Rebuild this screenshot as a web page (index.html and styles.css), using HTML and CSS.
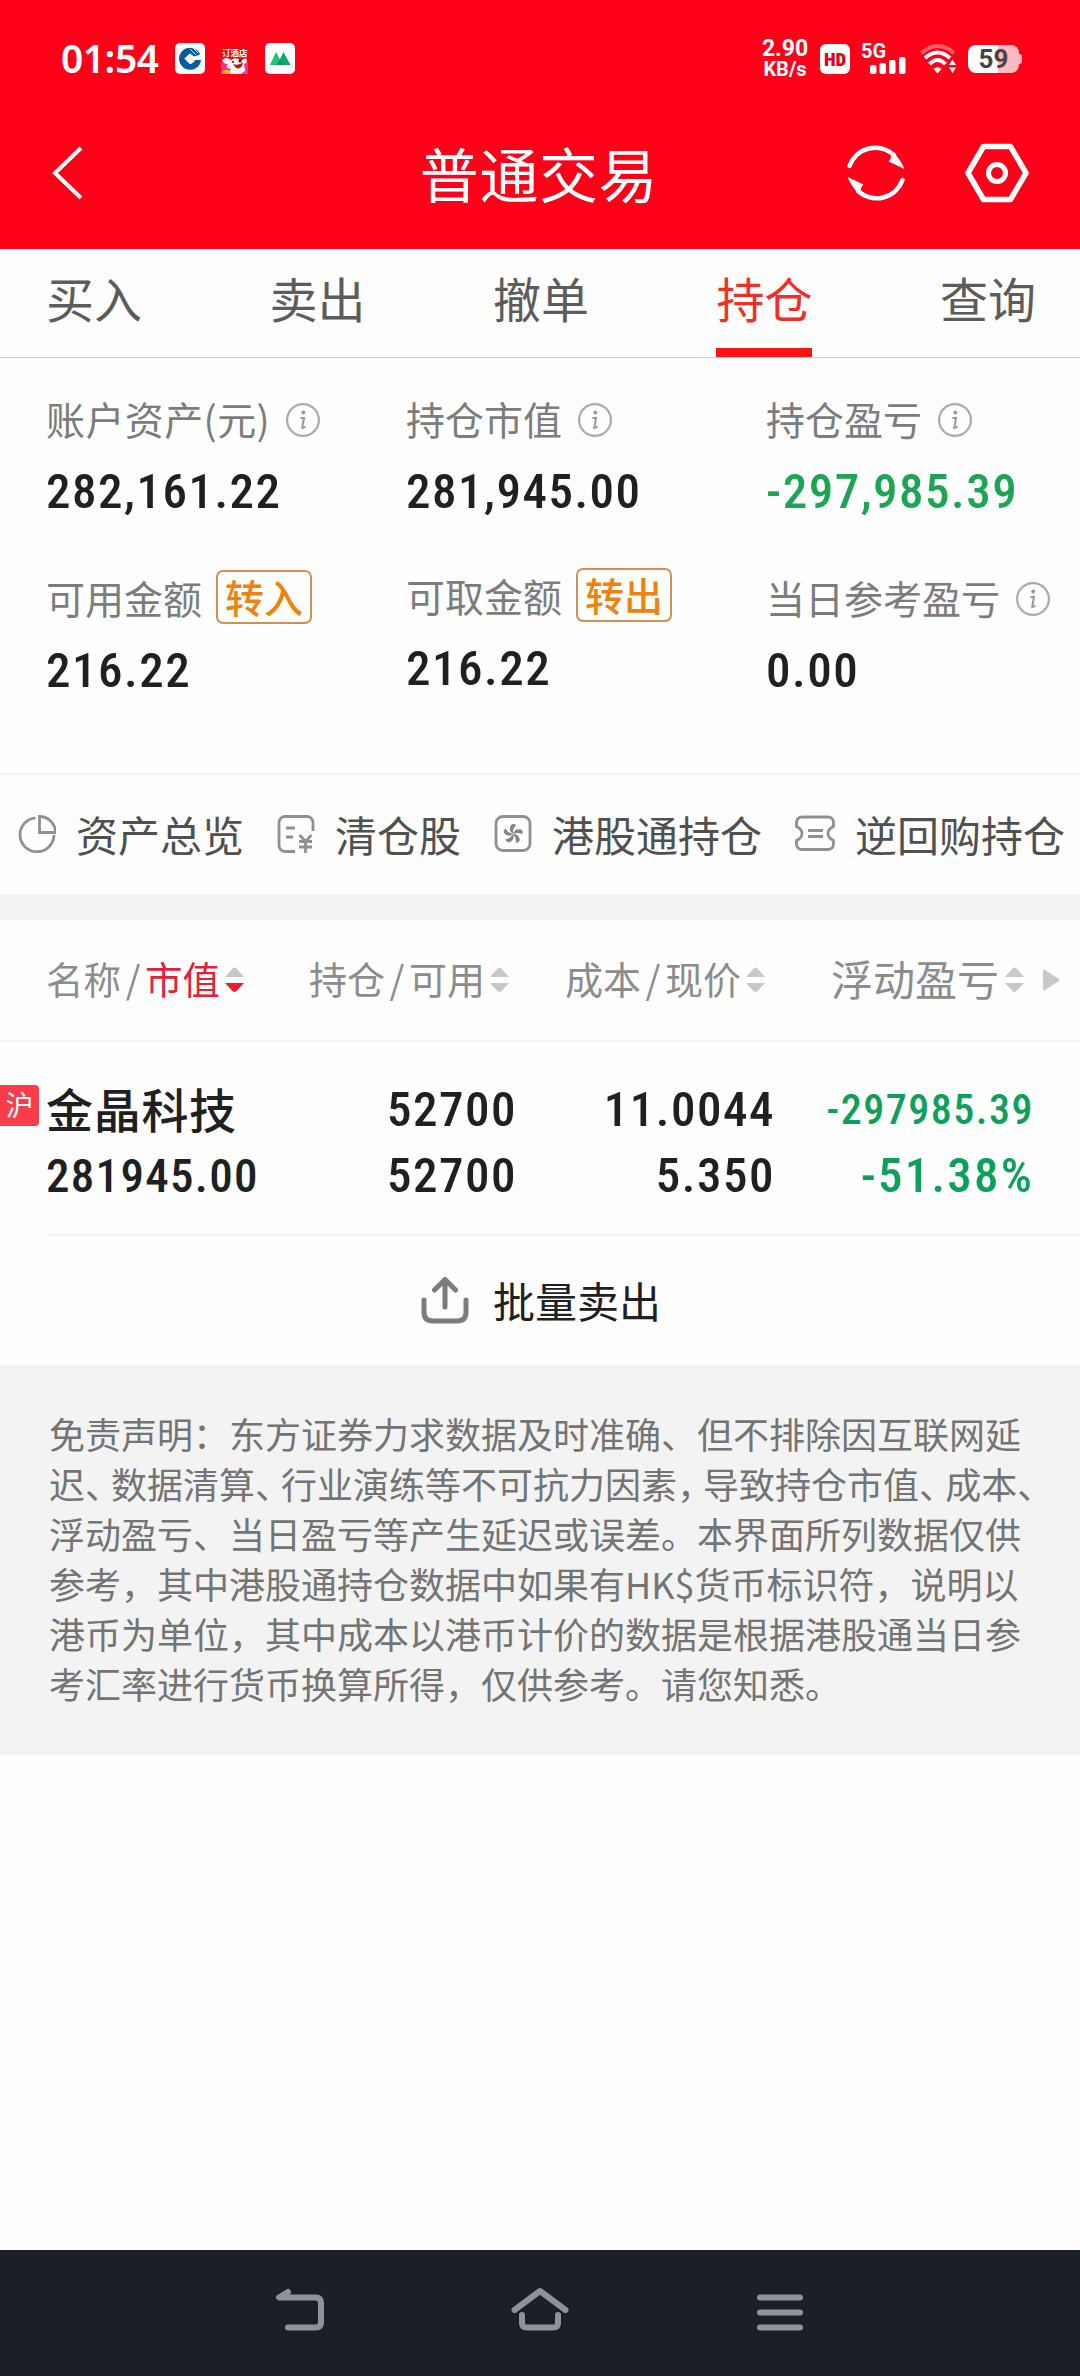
FILE: index.html
```html
<!DOCTYPE html>
<html lang="zh-CN">
  <head>
    <meta charset="utf-8" />
    <meta name="viewport" content="width=device-width, initial-scale=1" />
    <title>普通交易</title>
    <link rel="stylesheet" href="styles.css">
  </head>
<body>
    <header class="header">
        <div class="status">
            <span class="time">01:54</span>
            <!--notification icons-->
            <svg class="app" width="30" height="31" viewBox="0 0 30 31">
                <rect width="30" height="31" rx="5" fill="#fff"/>
                <path d="M25 11A11 11 0 1 0 26 17H20A6 6 0 0 1 15 21L9.500 15.500L15 10.500L19 13.500L24 12Z" fill="#065a9e"/>
                <path d="M15 10.500L20 15.500L15 21L9.500 15.500Z" fill="#fff"/>
                <path d="M15 6L21 12M18 5L23 10" stroke="#fff" stroke-width="1"/>
            </svg>
            <svg class="app rabbit" width="27" height="31" viewBox="0 0 27 31">
                <rect width="27" height="31" fill="#f00511"/>
                <rect y="19" width="27" height="12" fill="#f0317f"/>
                <text x="1" y="13" font-size="8.500" font-weight="700" fill="#fff">订酒店</text>
                <path d="M1 17Q5 13 10 17Q15 13 20 18Q25 13 26 17Q26 20 23 21L25 31H7L10 26Q3 25 7 21Q2 21 1 17Z" fill="#fff4f2"/>
                <path d="M12 21Q18 23 22 19Q21 27 15 25Z" fill="#a52025"/>
                <circle cx="12" cy="19" r="1" fill="#222"/>
                <circle cx="19" cy="18" r="1.500" fill="#222"/>
                <path d="M0 31Q2 26 8 27L10 31Z" fill="#ffb21c"/>
                <path d="M20 31L25 27L27 31Z" fill="#b44ee0"/>
            </svg>
            <svg class="app" width="30" height="31" viewBox="0 0 30 31">
                <rect width="30" height="31" rx="5" fill="#fff"/>
                <path d="M5 22L11 9L18 22Z" fill="#19c86f"/>
                <path d="M12 22L18.500 9L25.500 22Z" fill="#14a66b"/>
                <path d="M12 22L15 16L18 22Z" fill="#0f9460"/>
            </svg>

            <div class="status-right">
                <div class="speed"><span>2.90</span><span>KB/s</span></div>
                <div class="hd">HD</div>
                <div class="signal">
                    <span>5G</span>
                    <svg width="37" height="18" viewBox="0 0 37 18">
                        <g fill="#fff">
                            <rect x="0" y="9" width="6.500" height="9" rx="2"/>
                            <rect x="9.500" y="7" width="6.500" height="11" rx="2"/>
                            <rect x="19" y="4" width="6.500" height="14" rx="2"/>
                            <rect x="29" y="1" width="6.500" height="17" rx="2"/>
                        </g>
                    </svg>
                </div>
                <svg class="wifi" width="37" height="30" viewBox="0 0 37 30" fill="none">
                    <path d="M1.500 9Q17.500 -5 34 9" stroke="#ff6068" stroke-width="4"/>
                    <path d="M5 14Q17.500 3 30 14" stroke="#fff" stroke-width="4"/>
                    <path d="M9.500 20Q17.500 12 25.500 20" stroke="#fff" stroke-width="4"/>
                    <path d="M13.500 25Q17.500 21.500 21.500 25L17.500 29.500Z" fill="#fff"/>
                    <path d="M29 21L32.500 15.500L36 21ZM29 23.500L32.500 29L36 23.500Z" fill="#fff"/>
                </svg>
                <div class="battery">59</div>
            </div>
        </div>
        <div class="titlebar">
            <svg class="back" width="36" height="56" viewBox="0 0 36 56" fill="none">
                <path d="M32 3L6 28L32 53" stroke="#fff" stroke-width="4"/>
            </svg>
            <h1>普通交易</h1>
            <div class="actions">
                <svg width="60" height="60" viewBox="0 0 60 60" fill="none">
                    <g id="half">
                        <path d="M3.500 23A27.500 27.500 0 0 1 48 12" stroke="#fff" stroke-width="4.500" stroke-linecap="round"/>
                        <path d="M46 8.500Q54 15 58.500 26L42.500 18.500Q45.500 16 46 8.500Z" fill="#fff"/>
                    </g>
                    <use href="#half" transform="rotate(180 30 30)"/>
                </svg>
                <svg width="64" height="60" viewBox="0 0 64 60" fill="none" stroke="#fff">
                    <path d="M18.500 3.500H45.500L61 30L45.500 56.500H18.500L3 30Z" stroke-width="5.500" stroke-linejoin="round"/>
                    <circle cx="32" cy="30" r="8.500" stroke-width="5"/>
                </svg>
            </div>
        </div>
    </header>

    <nav class="tabs">
        <a class="tab">买入</a>
        <a class="tab">卖出</a>
        <a class="tab">撤单</a>
        <a class="tab active">持仓</a>
        <a class="tab">查询</a>
    </nav>

    <!--shared symbols-->
    <svg class="defs">
        <symbol id="info" viewBox="0 0 34 34">
            <circle cx="17" cy="17" r="15.900" fill="none" stroke="#aaa" stroke-width="2.200"/>
            <circle cx="17.300" cy="9.500" r="2" fill="#999"/>
            <path d="M14.500 15H18L16.200 25Q17 25.500 19.500 23.500" fill="none" stroke="#999" stroke-width="2"/>
        </symbol>
        <symbol id="sort" viewBox="0 0 19 26">
            <path d="M7.500 1.500Q9.500 -.5 11.500 1.500L19 10H0Z" fill="#c8c8c8"/>
            <path class="down" d="M0 16H19L11.500 24Q9.500 26 7.500 24Z"/>
        </symbol>
    </svg>

    <section class="assets">
        <div class="asset">
            <div class="label wide">账户资产(元)<svg class="info"><use href="#info"/></svg></div>
            <div class="value">282,161.22</div>
        </div>
        <div class="asset">
            <div class="label">持仓市值<svg class="info"><use href="#info"/></svg></div>
            <div class="value">281,945.00</div>
        </div>
        <div class="asset">
            <div class="label">持仓盈亏<svg class="info"><use href="#info"/></svg></div>
            <div class="value green">-297,985.39</div>
        </div>
        <div class="asset">
            <div class="label">可用金额<span class="transfer">转入</span></div>
            <div class="value">216.22</div>
        </div>
        <div class="asset raised">
            <div class="label">可取金额<span class="transfer">转出</span></div>
            <div class="value">216.22</div>
        </div>
        <div class="asset">
            <div class="label">当日参考盈亏<svg class="info"><use href="#info"/></svg></div>
            <div class="value">0.00</div>
        </div>
    </section>

    <section class="links">
        <a class="link">
            <svg width="38" height="38" viewBox="0 0 38 38">
                <path d="M17.500 2.800A17 17 0 1 0 36 20"/>
                <path d="M21.500 1.500V17.500H37.500A16 16 0 0 0 21.500 1.500Z"/>
            </svg>资产总览
        </a>
        <a class="link">
            <svg width="38" height="38" viewBox="0 0 38 38">
                <path d="M36 16V7.500A6 6 0 0 0 30 1.500H8A6 6 0 0 0 2 7.500V30.500A6 6 0 0 0 8 36.500H18"/>
                <path d="M9 13H18M9 22H16M22.500 20L28.500 26.500L34.500 20M28.500 26.500V38M22 26.500H35M22 32H35"/>
            </svg>清仓股
        </a>
        <a class="link">
            <svg width="38" height="38" viewBox="0 0 38 38">
                <rect x="2" y="1.500" width="34" height="34" rx="7"/>
                <g class="petals">
                    <path id="petal" d="M19 19Q14 16 17 10Q20 8 22 10.500Q18.500 13 19 19Z"/>
                    <use href="#petal" transform="rotate(72 19 19)"/>
                    <use href="#petal" transform="rotate(144 19 19)"/>
                    <use href="#petal" transform="rotate(216 19 19)"/>
                    <use href="#petal" transform="rotate(288 19 19)"/>
                </g>
            </svg>港股通持仓
        </a>
        <a class="link">
            <svg width="40" height="38" viewBox="0 0 40 38">
                <path d="M7 2H33A5.500 5.500 0 0 1 38.500 7.500V11.500Q33 14 33 18.500Q33 23 38.500 25.500V29A5.500 5.500 0 0 1 33 34.500H7A5.500 5.500 0 0 1 1.500 29V25.500Q7 23 7 18.500Q7 14 1.500 11.500V7.500A5.500 5.500 0 0 1 7 2Z"/>
                <path d="M13 15.500H28M13 21.500H28"/>
            </svg>逆回购持仓
        </a>
    </section>

    <section class="holdings">
        <div class="thead">
            <div class="th">名称<i>/</i><b>市值</b><svg class="sort desc"><use href="#sort"/></svg></div>
            <div class="th">持仓<i>/</i>可用<svg class="sort"><use href="#sort"/></svg></div>
            <div class="th">成本<i>/</i>现价<svg class="sort"><use href="#sort"/></svg></div>
            <div class="th big">浮动盈亏<svg class="sort"><use href="#sort"/></svg>
                <svg class="more" width="17" height="22" viewBox="0 0 17 22"><path d="M0 2Q0 0 2 1L16 10Q17 11 16 12L2 21Q0 22 0 20Z" fill="#c8c8c8"/></svg>
            </div>
        </div>
        <div class="row">
            <span class="market">沪</span>
            <div class="cell name"><span class="stock">金晶科技</span><span class="amount">281945.00</span></div>
            <div class="cell"><span>52700</span><span>52700</span></div>
            <div class="cell"><span>11.0044</span><span>5.350</span></div>
            <div class="cell green"><span class="loss">-297985.39</span><span class="percent">-51.38%</span></div>
        </div>
        <div class="sell">
            <svg width="48" height="48" viewBox="0 0 48 48" fill="none" stroke="#7c7c7c" stroke-width="5" stroke-linecap="round" stroke-linejoin="round">
                <path d="M3 24V36Q3 45 12 45H36Q45 45 45 36V24"/>
                <path d="M24 31V3.500M13.500 14L24 3.500L34.500 14"/>
            </svg>批量卖出
        </div>
    </section>

    <p class="disclaimer">
        免责声明：东方证券力求数据及时准确、但不排除因互联网延<br>
        迟<i>、</i>数据清算<i>、</i>行业演练等不可抗力因素<i>，</i>导致持仓市值<i>、</i>成本<i>、</i><br>
        浮动盈亏、当日盈亏等产生延迟或误差。本界面所列数据仅供<br>
        参考，其中港股通持仓数据中如果有HK$货币标识符，说明以<br>
        港币为单位，其中成本以港币计价的数据是根据港股通当日参<br>
        考汇率进行货币换算所得，仅供参考。请您知悉。
    </p>

    <!--android navigation bar-->
    <footer class="navbar">
        <svg width="60" height="46" viewBox="0 0 60 46">
            <path d="M18 5L9 10.500H46Q51 10.500 51 16V35Q51 40.500 46 40.500H18"/>
        </svg>
        <svg width="60" height="46" viewBox="0 0 60 46">
            <path d="M4.500 23L30 4L55.500 23"/>
            <path d="M12 28V36Q12 40.500 17 40.500H43Q48 40.500 48 36V28"/>
        </svg>
        <svg width="60" height="46" viewBox="0 0 60 46">
            <path d="M10 10.500H50M10 25.500H50M10 40.500H50"/>
        </svg>
    </footer>
</body>
</html>
```
FILE: styles.css
```css
*{
    box-sizing:border-box;
}
body{
    margin:0;
    width:1080px;
    height:2376px;
    display:flex;
    flex-direction:column;
    background-color:#fefefe;
    color:#202020;
    font-family:"Noto Sans CJK SC", sans-serif;
}
i{
    font-style:normal;
}
svg{
    flex-shrink:0;
}
.defs{
    display:none;
}

/*red header*/
.header{
    height:249px;
    background-color:#ff0019;
    color:#fff;
}
.status{
    height:100px;
    padding:17px 58px 0 61px;
    display:flex;
    align-items:center;
    font-family:Roboto, sans-serif;
}
.time{
    width:100px;
    margin-right:14px;
    font:600 39px "Noto Sans", sans-serif;
    line-height:50px;
    letter-spacing:-.5px;
    margin-top:-2px;
}
.app{
    margin-right:16px;
}
.rabbit{
    margin-right:17px;
    font-family:"Noto Sans CJK SC", sans-serif;
}
.status-right{
    margin-left:auto;
    display:flex;
    align-items:center;
}
.speed{
    width:46px;
    margin-right:12px;
    display:flex;
    flex-direction:column;
    align-items:center;
    font-size:23px;
    font-weight:700;
    line-height:20px;
}
.speed span:last-child{
    font-size:20px;
}
.hd{
    width:30px;
    height:30px;
    margin-right:11px;
    border-radius:6px;
    background-color:#fff;
    color:#e00018;
    font-size:19px;
    font-weight:900;
    font-stretch:80%;
    line-height:31px;
    text-align:center;
}
.signal{
    width:46px;
    height:30px;
    margin-right:13px;
    display:flex;
    flex-direction:column;
    font-size:20px;
    font-weight:700;
}
.signal span{
    height:12px;
    line-height:15px;
}
.signal svg{
    margin-left:9px;
}
.wifi{
    margin-right:11px;
}
.battery{
    position:relative;
    width:51px;
    height:28px;
    margin-right:3px;
    border-radius:8px;
    background:linear-gradient(90deg, #fff 59%, #ffb8bd 59%);
    color:#444;
    font-size:26px;
    font-weight:700;
    line-height:29px;
    text-align:center;
}
.battery::after{
    content:"";
    position:absolute;
    right:-3px;
    top:9px;
    width:3px;
    height:10px;
    border-radius:0 3px 3px 0;
    background-color:#ffb8bd;
}
.titlebar{
    height:149px;
    padding:0 51px 3px 49px;
    display:grid;
    grid-template-columns:1fr auto 1fr;
    align-items:center;
}
.titlebar h1{
    margin:0;
    font-size:59px;
    font-weight:400;
    line-height:84px;
    letter-spacing:.6px;
}
.actions{
    display:flex;
    justify-content:flex-end;
    gap:59px;
}

/*tabs*/
.tabs{
    height:109px;
    padding:0 44px 0 46px;
    display:flex;
    justify-content:space-between;
    border-bottom:1px solid #d0d0d0;
    color:#5c5c5c;
    font-size:48px;
    line-height:96px;
}
.tab.active{
    border-bottom:9px solid #fb1410;
    color:#f03028;
}

/*account summary*/
.assets{
    height:415px;
    padding:33px 0 0 46px;
    display:grid;
    grid-template-columns:360px 360px 1fr;
    grid-template-rows:179px 1fr;
}
.label{
    height:54px;
    display:flex;
    align-items:center;
    color:#7c7c7c;
    font-size:39px;
    line-height:54px;
    white-space:nowrap;
}
.label.wide{
    letter-spacing:.4px;
}
.info{
    width:34px;
    height:34px;
    margin:4px 0 0 16px;
}
.value{
    margin-top:17px;
    font-family:Roboto, sans-serif;
    font-size:49px;
    font-weight:480;
    font-stretch:87%;
    line-height:60px;
    letter-spacing:1.5px;
}
.green{
    color:#1ba555;
}
.transfer{
    width:96px;
    height:54px;
    margin-left:14px;
    border:2px solid #d09050;
    border-radius:7px;
    color:#ee820f;
    font-weight:500;
    line-height:48px;
    text-align:center;
}
.raised .label{
    margin:-2px 0 2px;
}

/*quick links*/
.links{
    height:121px;
    padding:0 0 3px 18px;
    display:flex;
    align-items:center;
    gap:33px;
    border-top:2px solid #f2f2f2;
    color:#505050;
    font-size:42px;
}
.link{
    display:flex;
    align-items:center;
    gap:20px;
    white-space:nowrap;
}
.link svg{
    margin-top:2px;
    fill:none;
    stroke:#909090;
    stroke-width:2.800;
}
.link .petals{
    fill:#858585;
    stroke:none;
}

/*holdings table*/
.holdings{
    height:471px;
    border-top:26px solid #f2f2f2;
}
.thead{
    height:122px;
    padding:0 0 5px 46px;
    display:grid;
    grid-template-columns:263px 256px 266px 1fr;
    align-items:center;
    border-bottom:2px solid #f3f3f3;
    color:#8c8c8c;
    font-size:38px;
}
.th{
    display:flex;
    align-items:center;
    white-space:nowrap;
}
.th i{
    width:24px;
    text-align:center;
}
.th b{
    color:#e6203a;
    font-weight:400;
}
.th:first-child{
    font-size:37.500px;
}
.th.big{
    font-size:42px;
}
.sort{
    width:19px;
    height:26px;
    margin:4px 0 0 5px;
    fill:#c8c8c8;
}
.th.big .sort{
    margin-left:6px;
}
.sort.desc{
    fill:#ee1c2c;
}
.more{
    margin:4px 0 0 19px;
}
.row{
    position:relative;
    height:192px;
    padding:35px 46px 0 46px;
    display:grid;
    grid-template-columns:262px 209px 258px 259px;
    font-family:Roboto, sans-serif;
    font-size:49px;
    font-weight:480;
    font-stretch:87%;
    letter-spacing:1.5px;
}
.market{
    position:absolute;
    left:0;
    top:43px;
    width:39px;
    height:41px;
    border-radius:0 4px 4px 0;
    background-color:#fa3c4b;
    color:#fff;
    font:400 28px "Noto Sans CJK SC", sans-serif;
    line-height:38px;
    letter-spacing:0;
    text-align:center;
}
.cell{
    display:flex;
    flex-direction:column;
    align-items:flex-end;
    line-height:66px;
}
.cell.name{
    align-items:flex-start;
}
.stock{
    height:66px;
    font-family:"Noto Sans CJK SC", sans-serif;
    font-size:47px;
    line-height:61px;
    letter-spacing:.7px;
}
.amount{
    font-size:47px;
    letter-spacing:1.3px;
}
.cell.green{
    color:#0ca05a;
}
.loss{
    font-size:42px;
    font-weight:550;
}
.percent{
    font-weight:550;
    letter-spacing:2.200px;
}
.sell{
    height:131px;
    margin-left:48px;
    padding:0 46px 2px 0;
    display:flex;
    align-items:center;
    justify-content:center;
    gap:24px;
    border-top:2px solid #f3f3f3;
    font-size:42px;
}

.disclaimer{
    height:390px;
    margin:0;
    padding:43px 0 0 49px;
    background-color:#f3f3f3;
    color:#747474;
    font-size:36px;
    line-height:50px;
    white-space:nowrap;
}
.disclaimer i{
    letter-spacing:-10px;
}

.navbar{
    height:126px;
    margin-top:auto;
    padding:37px 270px 0;
    display:flex;
    justify-content:space-between;
    background-color:#1c1f25;
}
.navbar svg{
    fill:none;
    stroke:#90929b;
    stroke-width:6;
    stroke-linecap:round;
    stroke-linejoin:round;
}
```
